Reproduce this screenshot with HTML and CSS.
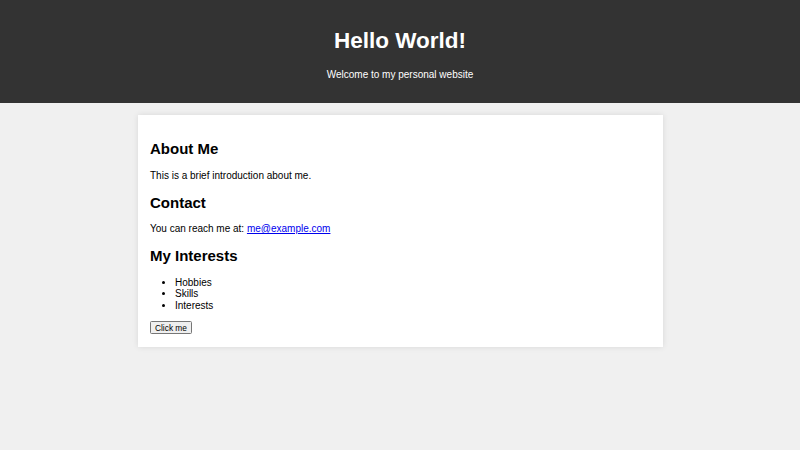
FILE: index.html
```html
<!DOCTYPE html>
<html lang="en">
<head>
    <meta charset="UTF-8">
    <meta name="viewport" content="width=device-width, initial-scale=1.0">
    <title>Hello World!</title>
    <link rel="stylesheet" href="styles.css">
</head>
<body>
    <header class="header">
        <h1>Hello World!</h1>
        <p>Welcome to my personal website</p>
    </header>

    <main class="card">
        <h2>About Me</h2>
        <p>This is a brief introduction about me.</p>

        <h2>Contact</h2>
        <p>You can reach me at: <a href="mailto:me@example.com">me@example.com</a></p>

        <h2>My Interests</h2>
        <ul>
            <li>Hobbies</li>
            <li>Skills</li>
            <li>Interests</li>
        </ul>

        <button class="btn" onclick="alert('Hello!')">Click me</button>
    </main>
</body>
</html>
```

FILE: styles.css
```css
body {
    margin: 0;
    font-family: "Liberation Sans", Arial, sans-serif;
    font-size: 10px;
    line-height: 11.5px;
    background-color: #f0f0f0;
    color: #000;
}

.header {
    background-color: #333;
    color: #fff;
    text-align: center;
    padding: 12.5px;

    h1 {
        font-size: 22.5px;
        line-height: 26px;
        margin: 15px 0;
    }

    p {
        margin: 10px 0 10px;
    }
}

.card {
    display: block;
    max-width: 500px;
    margin: 12.5px auto;
    padding: 12.5px;
    background-color: #fff;
    box-shadow: 0 0 6px rgba(0, 0, 0, 0.1);

    h2 {
        font-size: 15px;
        line-height: 17.25px;
        margin: 12.45px 0;
    }

    p {
        margin: 10px 0;
    }

    a {
        color: #0000ee;
    }

    ul {
        margin: 10px 0;
        padding-left: 25px;
    }
}

.btn {
    display: block;
    font-family: "Liberation Sans", Arial, sans-serif;
    font-size: 8.33px;
    height: 13px;
    line-height: 1;
    padding: 0 4px;
    color: #000;
    background-color: #efefef;
    border: 1px solid #767676;
    border-radius: 1.5px;
}
```
